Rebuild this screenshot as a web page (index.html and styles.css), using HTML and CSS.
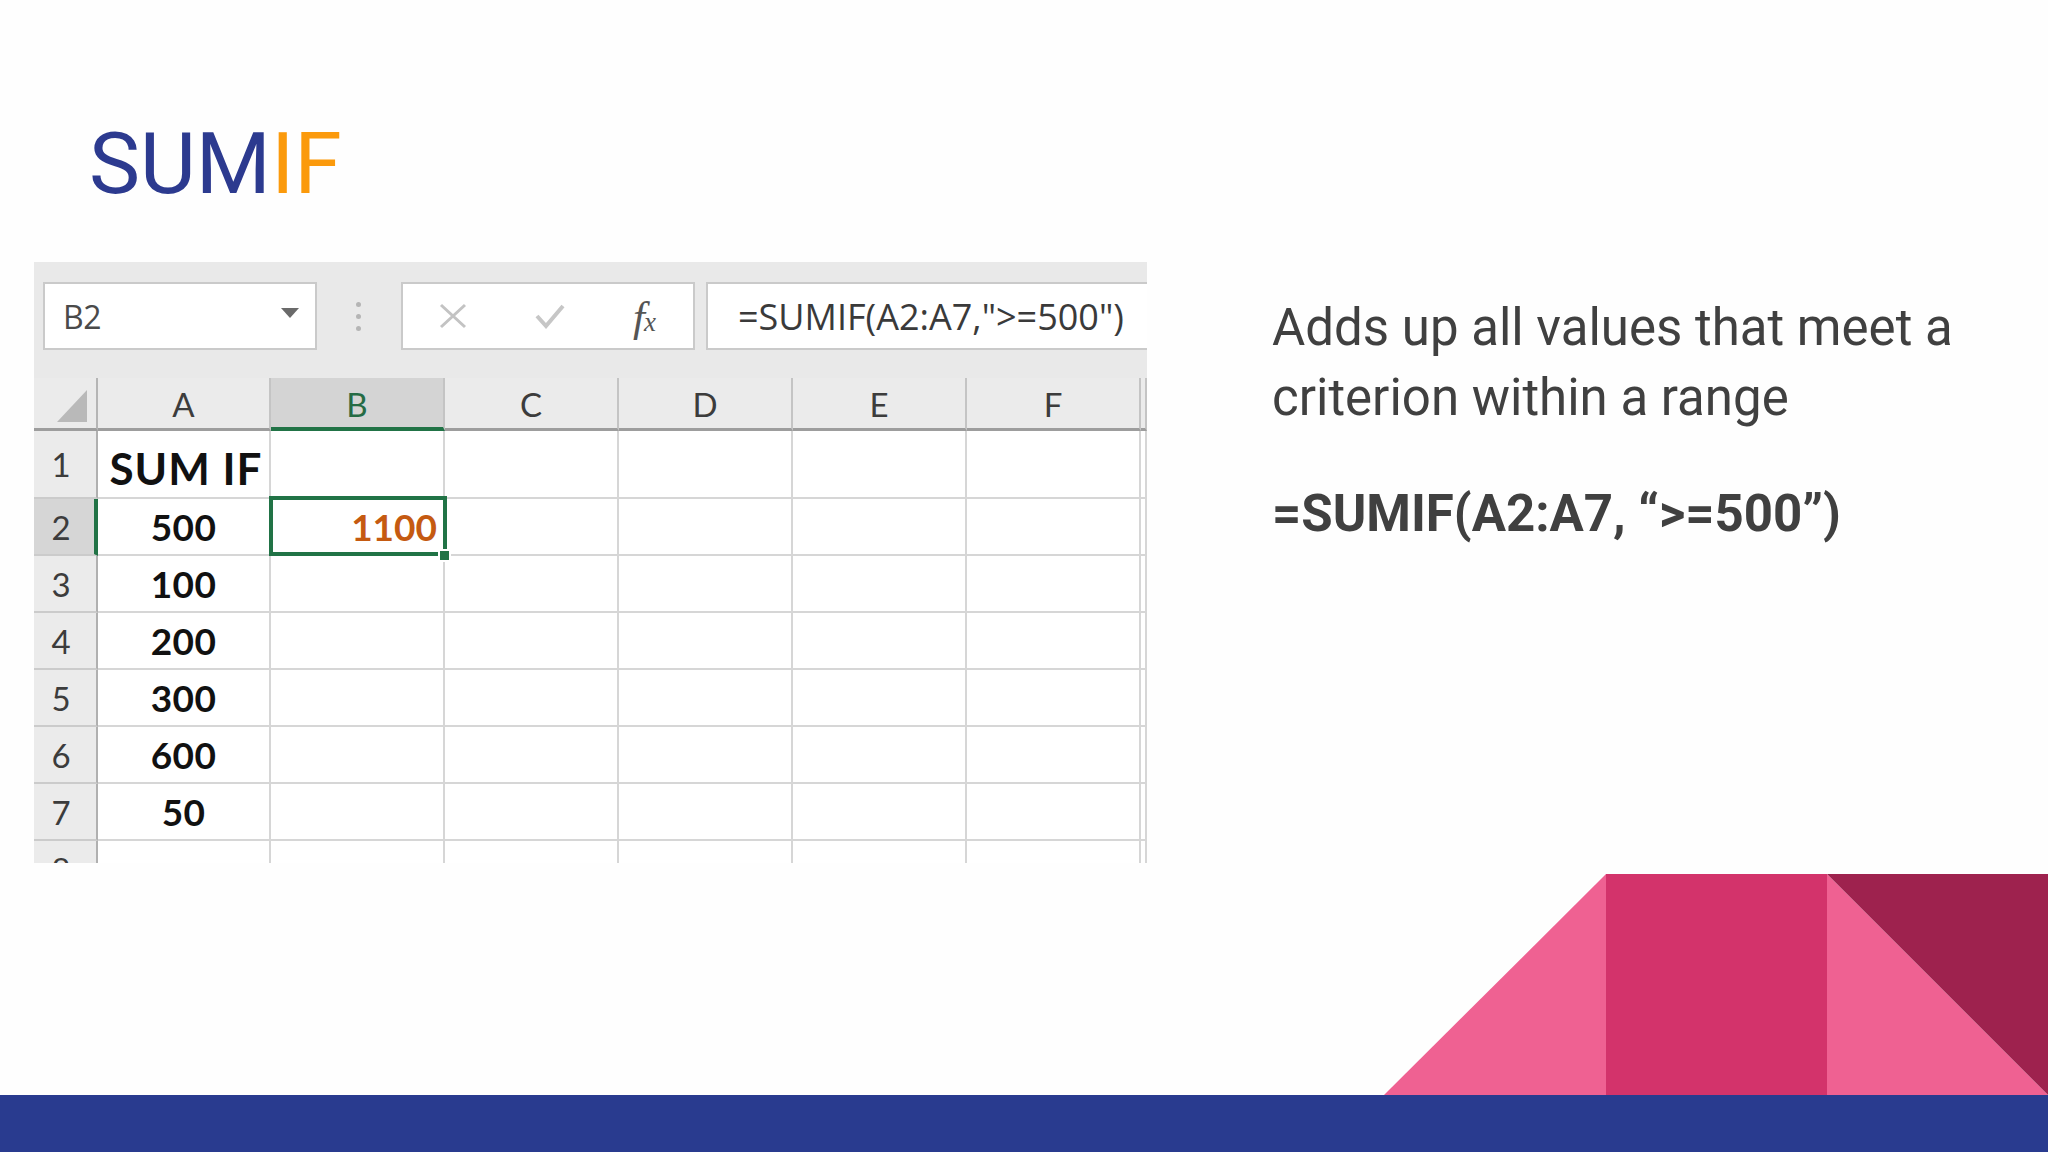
FILE: index.html
```html
<!DOCTYPE html>
<html lang="en">
<head>
<meta charset="utf-8">
<title>SUMIF</title>
<link rel="stylesheet" href="styles.css">
</head>
<body>
<div class="slide">
  <h1 class="title"><span class="t-blue">SUM</span><span class="t-orange">IF</span></h1>
  <div class="content">
    <div class="sheet">
      <div class="toolbar">
        <div class="namebox"><span class="nb-text">B2</span><span class="caret"></span></div>
        <div class="dots"><i></i><i></i><i></i></div>
        <div class="btnbox">
          <svg class="ic-x" width="28" height="26" viewBox="0 0 28 26"><path d="M2 2 L26 24 M26 2 L2 24" stroke="#c3c3c3" stroke-width="3" fill="none"/></svg>
          <svg class="ic-check" width="30" height="26" viewBox="0 0 30 26"><path d="M2 13 L11 23 L28 3" stroke="#c6c6c6" stroke-width="4" fill="none"/></svg>
          <span class="fx"><i class="fx-f">f</i><i class="fx-x">x</i></span>
        </div>
        <div class="fbox">=SUMIF(A2:A7,"&gt;=500")</div>
      </div>
      <div class="grid">
        <div class="ch corner"><span class="tri"></span></div>
        <div class="ch">A</div>
        <div class="ch ch-sel">B</div>
        <div class="ch">C</div>
        <div class="ch">D</div>
        <div class="ch">E</div>
        <div class="ch">F</div>
        <div class="ch"></div>

        <div class="rh">1</div>
        <div class="c c-a c-big">SUM IF</div>
        <div class="c"></div><div class="c"></div><div class="c"></div><div class="c"></div><div class="c"></div><div class="c"></div>

        <div class="rh rh-sel">2</div>
        <div class="c c-a">500</div>
        <div class="c c-sel"><span class="val">1100</span><span class="selbox"></span><span class="handle"></span></div>
        <div class="c"></div><div class="c"></div><div class="c"></div><div class="c"></div><div class="c"></div>

        <div class="rh">3</div>
        <div class="c c-a">100</div>
        <div class="c"></div><div class="c"></div><div class="c"></div><div class="c"></div><div class="c"></div><div class="c"></div>

        <div class="rh">4</div>
        <div class="c c-a">200</div>
        <div class="c"></div><div class="c"></div><div class="c"></div><div class="c"></div><div class="c"></div><div class="c"></div>

        <div class="rh">5</div>
        <div class="c c-a">300</div>
        <div class="c"></div><div class="c"></div><div class="c"></div><div class="c"></div><div class="c"></div><div class="c"></div>

        <div class="rh">6</div>
        <div class="c c-a">600</div>
        <div class="c"></div><div class="c"></div><div class="c"></div><div class="c"></div><div class="c"></div><div class="c"></div>

        <div class="rh">7</div>
        <div class="c c-a">50</div>
        <div class="c"></div><div class="c"></div><div class="c"></div><div class="c"></div><div class="c"></div><div class="c"></div>

        <div class="rh">8</div>
        <div class="c"></div>
        <div class="c"></div><div class="c"></div><div class="c"></div><div class="c"></div><div class="c"></div><div class="c"></div>
      </div>
    </div>
    <div class="desc">
      <p class="lead">Adds up all values that meet a<br>criterion within a range</p>
      <p class="formula">=SUMIF(A2:A7, “&gt;=500”)</p>
    </div>
  </div>
  <footer class="footer">
    <svg class="deco" width="664" height="221" viewBox="0 0 664 221">
      <polygon points="0,221 222,0 222,221" fill="#ef6192"/>
      <rect x="222" y="0" width="221" height="221" fill="#d3336b"/>
      <polygon points="443,0 664,221 443,221" fill="#ef6192"/>
      <polygon points="443,0 664,0 664,221" fill="#9e224e"/>
    </svg>
    <div class="bar"></div>
  </footer>
</div>
</body>
</html>
```

FILE: styles.css
```css
* { box-sizing: border-box; }
html, body { margin: 0; padding: 0; }
body { background: #fefefe; font-family: Roboto, "Liberation Sans", sans-serif; }

.slide {
  width: 2048px;
  height: 1152px;
  display: flex;
  flex-direction: column;
  overflow: hidden;
}

.title {
  margin: 0;
  padding: 120px 0 0 89px;
  font-family: Roboto, "Liberation Sans", sans-serif;
  font-weight: 400;
  font-size: 86px;
  line-height: 87px;
  height: 207px;
}
.t-blue { color: #2c3a8f; }
.t-orange { color: #fb9a0c; }

.content {
  display: flex;
  margin-top: 55px;
}

/* spreadsheet */
.sheet {
  margin-left: 34px;
  width: 1113px;
  height: 601px;
  overflow: hidden;
  background: #ffffff;
  display: flex;
  flex-direction: column;
}

.toolbar {
  height: 116px;
  flex: none;
  background: #e9e9e9;
  display: flex;
  align-items: flex-start;
  padding: 20px 0 0 9px;
  font-family: "Open Sans", "Noto Sans", sans-serif;
}
.namebox {
  width: 274px;
  height: 68px;
  flex: none;
  background: #fff;
  border: 2px solid #cacaca;
  display: flex;
  align-items: center;
  justify-content: space-between;
  padding: 0 16px 0 18px;
}
.nb-text { font-size: 32px; color: #4a4a4a; letter-spacing: -0.3px; }
.caret {
  width: 0; height: 0;
  border-left: 9px solid transparent;
  border-right: 9px solid transparent;
  border-top: 10px solid #6a6a6a;
  margin-bottom: 6px;
}
.dots {
  margin-left: 39px;
  width: 6px;
  height: 68px;
  display: flex;
  flex-direction: column;
  align-items: center;
  justify-content: center;
  gap: 7px;
}
.dots i { width: 5px; height: 5px; border-radius: 50%; background: #b5b5b5; display: block; }
.btnbox {
  margin-left: 40px;
  width: 294px;
  height: 68px;
  flex: none;
  background: #fff;
  border: 2px solid #cacaca;
  display: flex;
  align-items: center;
  padding-left: 36px;
}
.ic-x { flex: none; }
.ic-check { flex: none; margin-left: 68px; }
.fx {
  margin-left: 68px;
  font-family: "Liberation Serif", serif;
  color: #555;
  display: flex;
  align-items: baseline;
}
.fx-f { font-size: 43px; font-weight: 400; }
.fx-x { font-size: 27px; margin-left: -1px; }
.fbox {
  margin-left: 11px;
  width: 520px;
  height: 68px;
  flex: none;
  background: #fff;
  border: 2px solid #cacaca;
  display: flex;
  align-items: center;
  padding-left: 30px;
  font-size: 36px;
  color: #3a3a3a;
  letter-spacing: 0;
  white-space: nowrap;
}

.grid {
  display: grid;
  grid-template-columns: 64px 173px 174px 174px 174px 174px 174px 6px;
  grid-template-rows: 53px 68px repeat(7, 57px);
  font-family: Lato, "Liberation Sans", sans-serif;
}
.ch {
  background: #ebebeb;
  border-right: 2px solid #c4c4c4;
  border-bottom: 3px solid #9d9d9d;
  display: flex;
  align-items: center;
  justify-content: center;
  font-size: 33px;
  color: #3c3c3c;
  padding-top: 2px;
}
.corner { justify-content: flex-end; align-items: flex-end; padding: 0 9px 6px 0; border-right-color: #b5b5b5; }
.tri {
  width: 30px; height: 32px;
  background: #b9b9b9;
  clip-path: polygon(100% 0, 100% 100%, 0 100%);
  display: block;
}
.ch-sel {
  background: #d4d4d4;
  color: #256b44;
  border-bottom: 4px solid #217346;
}
.rh {
  background: #ebebeb;
  border-right: 2px solid #b0b0b0;
  border-bottom: 2px solid #cbcbcb;
  display: flex;
  align-items: center;
  justify-content: center;
  padding-right: 8px;
  font-size: 33px;
  color: #3c3c3c;
}
.rh:first-of-type { padding-top: 6px; }
.rh-sel {
  background: #d6d6d6;
  border-right: 4px solid #217346;
  padding-right: 6px;
}
.c {
  border-right: 2px solid #d6d6d6;
  border-bottom: 2px solid #d6d6d6;
  display: flex;
  align-items: center;
  justify-content: center;
  font-weight: 700;
  font-size: 37px;
  color: #111;
}
.c-a { letter-spacing: 0.4px; }
.c-big { font-size: 44px; letter-spacing: 1px; padding: 7px 0 0 5px; }
.c-sel {
  position: relative;
  justify-content: flex-end;
  padding-right: 6px;
}
.val { color: #c55a11; }
.selbox {
  position: absolute;
  left: -2px;
  top: -3px;
  right: -4px;
  bottom: -2px;
  border: 4px solid #217346;
}
.handle {
  position: absolute;
  left: 167px;
  top: 50px;
  width: 13px;
  height: 13px;
  background: #217346;
  border: 2px solid #fff;
}

/* description */
.desc {
  margin-left: 125px;
  padding-top: 31px;
  color: #404040;
}
.lead {
  margin: 0;
  font-size: 51px;
  line-height: 70px;
  font-weight: 400;
}
.formula {
  margin: 46px 0 0 0;
  font-size: 51px;
  line-height: 70px;
  font-weight: 700;
}

/* footer */
.footer {
  margin-top: auto;
  display: flex;
  flex-direction: column;
  align-items: flex-end;
}
.deco { display: block; }
.bar {
  width: 100%;
  height: 57px;
  background: #293b8f;
}
```
